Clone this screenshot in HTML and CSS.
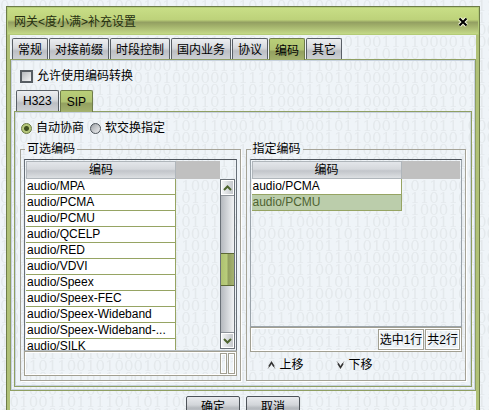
FILE: index.html
```html
<!DOCTYPE html>
<html lang="zh-CN">
<head>
<meta charset="utf-8">
<title>补充设置</title>
<link rel="stylesheet" href="styles.css">
</head>
<body>
<svg class="texture" aria-hidden="true" width="100%" height="100%">
  <defs>
    <pattern id="bits" width="248" height="96" patternUnits="userSpaceOnUse">
      <text x="0" y="11">01100010000100010110110111</text>
      <text x="0" y="23">00100110111101101100010111</text>
      <text x="0" y="35">10111000101110010110111000</text>
      <text x="0" y="47">00000100110100111100001000</text>
      <text x="0" y="59">10100010111101010011010111</text>
      <text x="0" y="71">00110111010010000010001110</text>
      <text x="0" y="83">11010110010100010100000011</text>
      <text x="0" y="95">01000011101110001011000101</text>
    </pattern>
  </defs>
  <rect width="100%" height="100%" fill="url(#bits)"/>
</svg>
<main class="page">
  <section class="window">
    <header class="titlebar">
      <h1>网关&lt;度小满&gt;补充设置</h1>
      <button class="close" type="button" aria-label="关闭">
        <svg width="10" height="10" viewBox="0 0 10 10"><path d="M1.500 1.500l7 7M8.500 1.500l-7 7" stroke="#f4f8dc" stroke-width="4"/><path d="M1.500 1.500l7 7M8.500 1.500l-7 7" stroke="#000" stroke-width="2"/></svg>
      </button>
    </header>
    <div class="content">
      <nav class="tabs">
        <button class="tab" type="button">常规</button>
        <button class="tab" type="button">对接前缀</button>
        <button class="tab" type="button">时段控制</button>
        <button class="tab" type="button">国内业务</button>
        <button class="tab" type="button">协议</button>
        <button class="tab active" type="button">编码</button>
        <button class="tab" type="button">其它</button>
      </nav>
      <div class="panel outer">
        <label class="check"><input type="checkbox">允许使用编码转换</label>
        <nav class="tabs sub">
          <button class="tab" type="button">H323</button>
          <button class="tab active" type="button">SIP</button>
        </nav>
        <div class="panel inner">
          <div class="radios">
            <label><input type="radio" name="mode" checked>自动协商</label>
            <label><input type="radio" name="mode">软交换指定</label>
          </div>
          <div class="groups">
            <fieldset class="group">
              <legend>可选编码</legend>
              <div class="list tall">
                <div class="rows">
                  <table>
                    <thead><tr><th>编码</th></tr></thead>
                    <tbody>
                      <tr><td>audio/MPA</td></tr>
                      <tr><td>audio/PCMA</td></tr>
                      <tr><td>audio/PCMU</td></tr>
                      <tr><td>audio/QCELP</td></tr>
                      <tr><td>audio/RED</td></tr>
                      <tr><td>audio/VDVI</td></tr>
                      <tr><td>audio/Speex</td></tr>
                      <tr><td>audio/Speex-FEC</td></tr>
                      <tr><td>audio/Speex-Wideband</td></tr>
                      <tr><td>audio/Speex-Wideband-...</td></tr>
                      <tr><td>audio/SILK</td></tr>
                    </tbody>
                  </table>
                  <div class="filler"></div>
                </div>
                <div class="scrollbar">
                  <button type="button" aria-label="向上滚动"><svg width="9" height="6" viewBox="0 0 9 6"><path d="M1 5l3.500-3.500L8 5" fill="none" stroke="#4d642e" stroke-width="2"/></svg></button>
                  <div class="track"><div class="thumb"></div></div>
                  <button type="button" aria-label="向下滚动"><svg width="9" height="6" viewBox="0 0 9 6"><path d="M1 1l3.500 3.500L8 1" fill="none" stroke="#4d642e" stroke-width="2"/></svg></button>
                </div>
              </div>
              <div class="status"><span class="cell"></span><span class="cell"></span></div>
            </fieldset>
            <fieldset class="group">
              <legend>指定编码</legend>
              <div class="list">
                <div class="rows">
                  <table>
                    <thead><tr><th>编码</th></tr></thead>
                    <tbody>
                      <tr><td>audio/PCMA</td></tr>
                      <tr class="selected"><td>audio/PCMU</td></tr>
                    </tbody>
                  </table>
                  <div class="filler"></div>
                </div>
              </div>
              <div class="status"><span class="cell">选中1行</span><span class="cell">共2行</span></div>
              <div class="moves">
                <button type="button"><svg width="9" height="8" viewBox="0 0 9 8"><path d="M1 7.500l3.500-6 3.500 6" fill="none" stroke="#999" stroke-width="1"/><path d="M2 5.500l2.500-4 2.500 4" fill="none" stroke="#333" stroke-width="1.500"/></svg>上移</button>
                <button type="button"><svg width="9" height="8" viewBox="0 0 9 8"><path d="M1 .5l3.500 6L8 .5" fill="none" stroke="#999" stroke-width="1"/><path d="M2 2.500l2.500 4 2.500-4" fill="none" stroke="#333" stroke-width="1.500"/></svg>下移</button>
              </div>
            </fieldset>
          </div>
        </div>
      </div>
      <footer class="actions">
        <button type="button">确定</button>
        <button type="button">取消</button>
      </footer>
    </div>
  </section>
</main>
</body>
</html>
```

FILE: styles.css
```css
* { box-sizing: border-box; }
body {
  margin: 0;
  background: #eff4f8;
  color: #000;
}
body, button, input {
  font: 12px/16px "Liberation Sans", "Noto Sans CJK SC", sans-serif;
}
button { color: #000; cursor: default; }
.texture { position: absolute; inset: 0; z-index: -1; }
.texture text { font: 15px "DejaVu Serif", serif; fill: #e4e9ec; }
.page {
  height: 100vh;
  overflow: hidden;
  padding: 6px 9px 0 6px;
}
.window { border: 1px solid #6d7c48; }
.titlebar {
  display: flex;
  align-items: center;
  justify-content: space-between;
  height: 28px;
  padding: 2px 10px 0 6px;
  border: 1px solid #b4cc78;
  background: linear-gradient(#c8de86 0, #bdd27a 45%, #939f62 55%, #a3b26c 70%, #c4d988 100%);
}
h1 { margin: 0; font-size: 12px; line-height: 16px; font-weight: normal; color: #26300f; }
.close { display: flex; padding: 0; border: 0; background: none; }
.content {
  padding-top: 3px;
  border: solid #b0c177;
  border-width: 0 3px;
}
.tabs { display: flex; gap: 1px; padding-left: 2px; }
.tab {
  height: 21px;
  padding: 2px 5px 0;
  border: 1px solid #595f66;
  border-bottom: 0;
  border-radius: 2px 2px 0 0;
  background: linear-gradient(#eceef1 0, #d6d9dd 45%, #bcbfc4 60%, #cdd0d4 100%);
}
.tab.active {
  height: 22px;
  margin-bottom: -1px;
  border-color: #6f7c4a;
  background: linear-gradient(#b9cf78 0, #afc272 50%, #93a060 60%, #a4b26e 100%);
}
.panel { border: 1px solid #8f9f62; box-shadow: inset 0 0 0 1px #c8d2df; }
.outer { padding: 8px 3px 3px; }
.check { display: flex; align-items: center; gap: 4px; padding: 0 6px; height: 16px; }
input { appearance: none; margin: 0; }
.check input {
  width: 13px;
  height: 13px;
  border: 2px solid #565d63;
  background: linear-gradient(135deg, #b5b9bd, #f4f5f6);
}
.sub { margin-top: 6px; }
.sub .tab { padding: 0 6px; }
.inner { padding: 8px 5px 5px; }
.radios { display: flex; gap: 6px; padding-left: 1px; height: 16px; }
.radios label { display: flex; align-items: center; gap: 4px; }
.radios input {
  width: 11px;
  height: 11px;
  border: 1px solid #4b5258;
  border-radius: 50%;
  background: linear-gradient(135deg, #9da2a7, #f0f1f2);
}
.radios input:checked {
  border-color: #68783f;
  background: radial-gradient(circle, #3f4e20 0 2px, #b5c77b 3px);
}
.groups { display: flex; gap: 5px; margin-top: 5px; }
.group {
  flex: 1;
  min-width: 0;
  margin: 0;
  padding: 2px 3px 4px;
  border: 1px solid #a5a397;
  box-shadow: 1px 1px #fff;
}
legend { margin-left: 1px; padding: 0 2px; line-height: 16px; }
.list {
  display: flex;
  height: 168px;
  padding: 1px;
  border: 1px solid #9aa3aa;
  border-top-color: #4f555c;
  overflow: hidden;
}
.list.tall { height: 192px; border-color: #4f555c #687078 #b9c0c5; }
.rows { flex: 1; display: flex; align-items: flex-start; }
table { width: 150px; border-collapse: separate; border-spacing: 0; }
th {
  height: 18px;
  padding: 0;
  font-weight: normal;
  line-height: 16px;
  border: 1px solid #b0b6bb;
  background: linear-gradient(#e3e6ea 0, #d5d8dc 45%, #c2c5ca 55%, #dde0e3 100%);
}
td {
  height: 16px;
  padding: 0 1px;
  line-height: 15px;
  border: solid #96a463;
  border-width: 0 1px 1px 0;
  background: #fff;
  white-space: nowrap;
}
.selected td { background: #bbcdab; color: #4e6331; }
.filler { flex: 1; height: 18px; background: #c0c0c0; }
.scrollbar {
  display: flex;
  flex-direction: column;
  width: 15px;
  margin-top: 18px;
  border: 1px solid #6a7178;
}
.scrollbar button {
  display: flex;
  align-items: center;
  justify-content: center;
  height: 15px;
  padding: 0;
  border: 1px solid #fff;
  background: linear-gradient(90deg, #f1f3f4, #c5c9cd);
}
.track {
  flex: 1;
  padding-top: 57px;
  border: solid #8d9399;
  border-width: 1px 0;
  background: linear-gradient(90deg, #b5b9be, #f1f3f5);
}
.thumb {
  height: 33px;
  border: solid #5c6935;
  border-width: 1px 0;
  background: linear-gradient(90deg, #aec16f, #b9cd7c 45%, #929f5f 55%, #a5b371);
}
.status {
  display: flex;
  justify-content: flex-end;
  gap: 1px;
  height: 25px;
  padding: 1px;
  border: 1px solid #a19f91;
  box-shadow: inset 0 0 0 1px #fff;
}
.cell {
  min-width: 7px;
  padding: 2px 1px 0;
  border: 1px solid #a19f91;
  box-shadow: inset 0 0 0 1px #fff;
}
.moves { display: flex; gap: 32px; padding: 5px 0 0 17px; }
.moves button {
  display: flex;
  align-items: center;
  gap: 4px;
  padding: 0;
  border: 0;
  background: none;
}
.actions { display: flex; justify-content: center; gap: 6px; padding-top: 5px; }
.actions button {
  width: 54px;
  height: 22px;
  padding: 0;
  border: 1px solid #4d5359;
  border-radius: 2px;
  background: linear-gradient(#e8eaed 0, #d2d5d9 40%, #b5b9be 55%, #cfd2d6 100%);
}
```
